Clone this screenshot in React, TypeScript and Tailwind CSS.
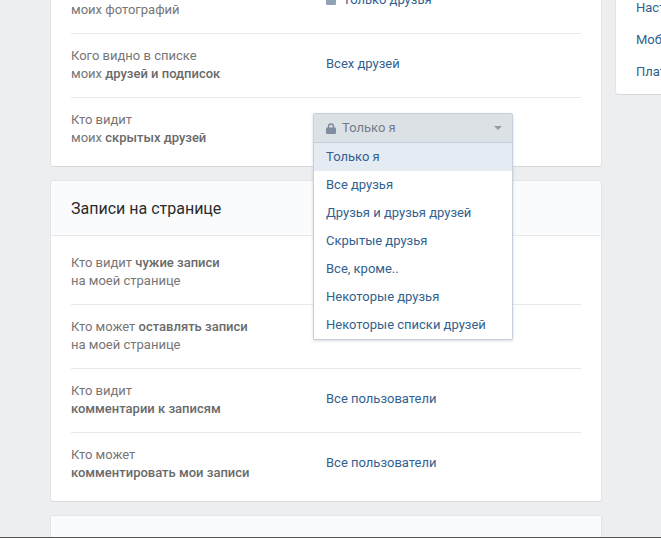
const font = "font-['Roboto',sans-serif]"

const options = [
  "Только я",
  "Все друзья",
  "Друзья и друзья друзей",
  "Скрытые друзья",
  "Все, кроме..",
  "Некоторые друзья",
  "Некоторые списки друзей",
]

function LockIcon({ className }: { className: string }) {
  return (
    <svg viewBox="0 0 10 11" className={className} fill="currentColor">
      <path d="M1.8 5V3.4a3.2 3.2 0 0 1 6.4 0V5H6.7V3.5a1.7 1.7 0 0 0-3.4 0V5z" />
      <rect x="0" y="4.5" width="10" height="6.5" rx="1.2" />
    </svg>
  )
}

function Dropdown() {
  return (
    <div className="absolute left-[-13px] top-[15px] z-10 w-[200px] rounded-[2px] border border-[#c5d0db] bg-white shadow-[0_1px_3px_rgba(0,0,0,0.15)]">
      <div className="flex h-[29px] items-center border-b border-[#c5d0db] bg-[#dce1e6] pl-[12px] pr-[10px] text-[#737d89]">
        <LockIcon className="h-[11px] w-[10px] text-[#828c9f]" />
        <span className="ml-[6px] flex-1">Только я</span>
        <span className="h-0 w-0 border-x-[4px] border-t-[4px] border-x-transparent border-t-[#929ba5]" />
      </div>
      {options.map((option, i) => (
        <div
          key={option}
          className={`flex h-[28px] items-center pl-[12px] text-[#325f8f] ${i === 0 ? "bg-[#e5ebf3]" : ""}`}
        >
          {option}
        </div>
      ))}
    </div>
  )
}

function Row({
  label,
  value,
  first,
  last,
  children,
}: {
  label: React.ReactNode
  value?: React.ReactNode
  first?: boolean
  last?: boolean
  children?: React.ReactNode
}) {
  let size = "h-[64px] border-b border-[#e7e8ec] pb-[2px]"
  if (first) size = "h-[69px] border-b border-[#e7e8ec] pb-[2px] pt-[5px]"
  if (last) size = "h-[68px] pb-[7px]"
  return (
    <div className={`flex items-center ${size}`}>
      <div className="w-[255px] shrink-0 leading-[18px] text-[#767676]">{label}</div>
      <div className={`relative flex-1 text-[#325f8f] ${children ? "self-start" : "pb-[2px]"}`}>
        {value}
        {children}
      </div>
    </div>
  )
}

function Card({ children, title }: { children?: React.ReactNode; title?: string }) {
  return (
    <div className="rounded-[2px] bg-white shadow-[0_1px_0_0_#d7d8db,0_0_0_1px_#e3e4e8]">
      {title !== undefined && (
        <div className="flex h-[55px] items-center rounded-t-[2px] border-b border-[#e7e8ec] bg-[#fafbfd] px-[20px] pt-[2px] text-[16px] text-[#2b2b2b]">
          {title}
        </div>
      )}
      {children && <div className="px-[20px]">{children}</div>}
    </div>
  )
}

const b = "font-medium text-[#6a6a6a]"

export default function App() {
  return (
    <div className={`relative h-[538px] w-[661px] overflow-hidden bg-[#edeef0] text-[13px] ${font}`}>
      <div className="ml-[51px] mt-[-30px] flex items-start gap-[15px]">
        <div className="flex w-[550px] shrink-0 flex-col gap-[15px]">
          <Card>
            <Row
              label={
                <>
                  Кто видит фотографии,
                  <br />
                  моих фотографий
                </>
              }
              value={
                <span className="flex items-center gap-[7px]">
                  <LockIcon className="h-[11px] w-[10px] text-[#92a0b8]" />
                  Только друзья
                </span>
              }
            />
            <Row
              label={
                <>
                  Кого видно в списке
                  <br />
                  моих <span className={b}>друзей и подписок</span>
                </>
              }
              value="Всех друзей"
            />
            <Row
              last
              label={
                <>
                  Кто видит
                  <br />
                  моих <span className={b}>скрытых друзей</span>
                </>
              }
            >
              <Dropdown />
            </Row>
          </Card>
          <Card title="Записи на странице">
            <Row
              first
              label={
                <>
                  Кто видит <span className={b}>чужие записи</span>
                  <br />
                  на моей странице
                </>
              }
            />
            <Row
              label={
                <>
                  Кто может <span className={b}>оставлять записи</span>
                  <br />
                  на моей странице
                </>
              }
            />
            <Row
              label={
                <>
                  Кто видит
                  <br />
                  <span className={b}>комментарии к записям</span>
                </>
              }
              value="Все пользователи"
            />
            <Row
              last
              label={
                <>
                  Кто может
                  <br />
                  <span className={b}>комментировать мои записи</span>
                </>
              }
              value="Все пользователи"
            />
          </Card>
          <Card title="Связь со мной" />
        </div>
        <div className="w-[200px] shrink-0 rounded-[2px] bg-white pb-[6px] pl-[20px] pt-[22px] text-[#325f8f] shadow-[0_1px_0_0_#d7d8db,0_0_0_1px_#e3e4e8]">
          <div className="flex h-[32px] items-center whitespace-nowrap">Настройки</div>
          <div className="flex h-[32px] items-center whitespace-nowrap">Мобильные сервисы</div>
          <div className="flex h-[32px] items-center whitespace-nowrap">Платежи</div>
        </div>
      </div>
      <div className="absolute bottom-0 left-0 h-px w-full bg-[#555555]" />
    </div>
  )
}
